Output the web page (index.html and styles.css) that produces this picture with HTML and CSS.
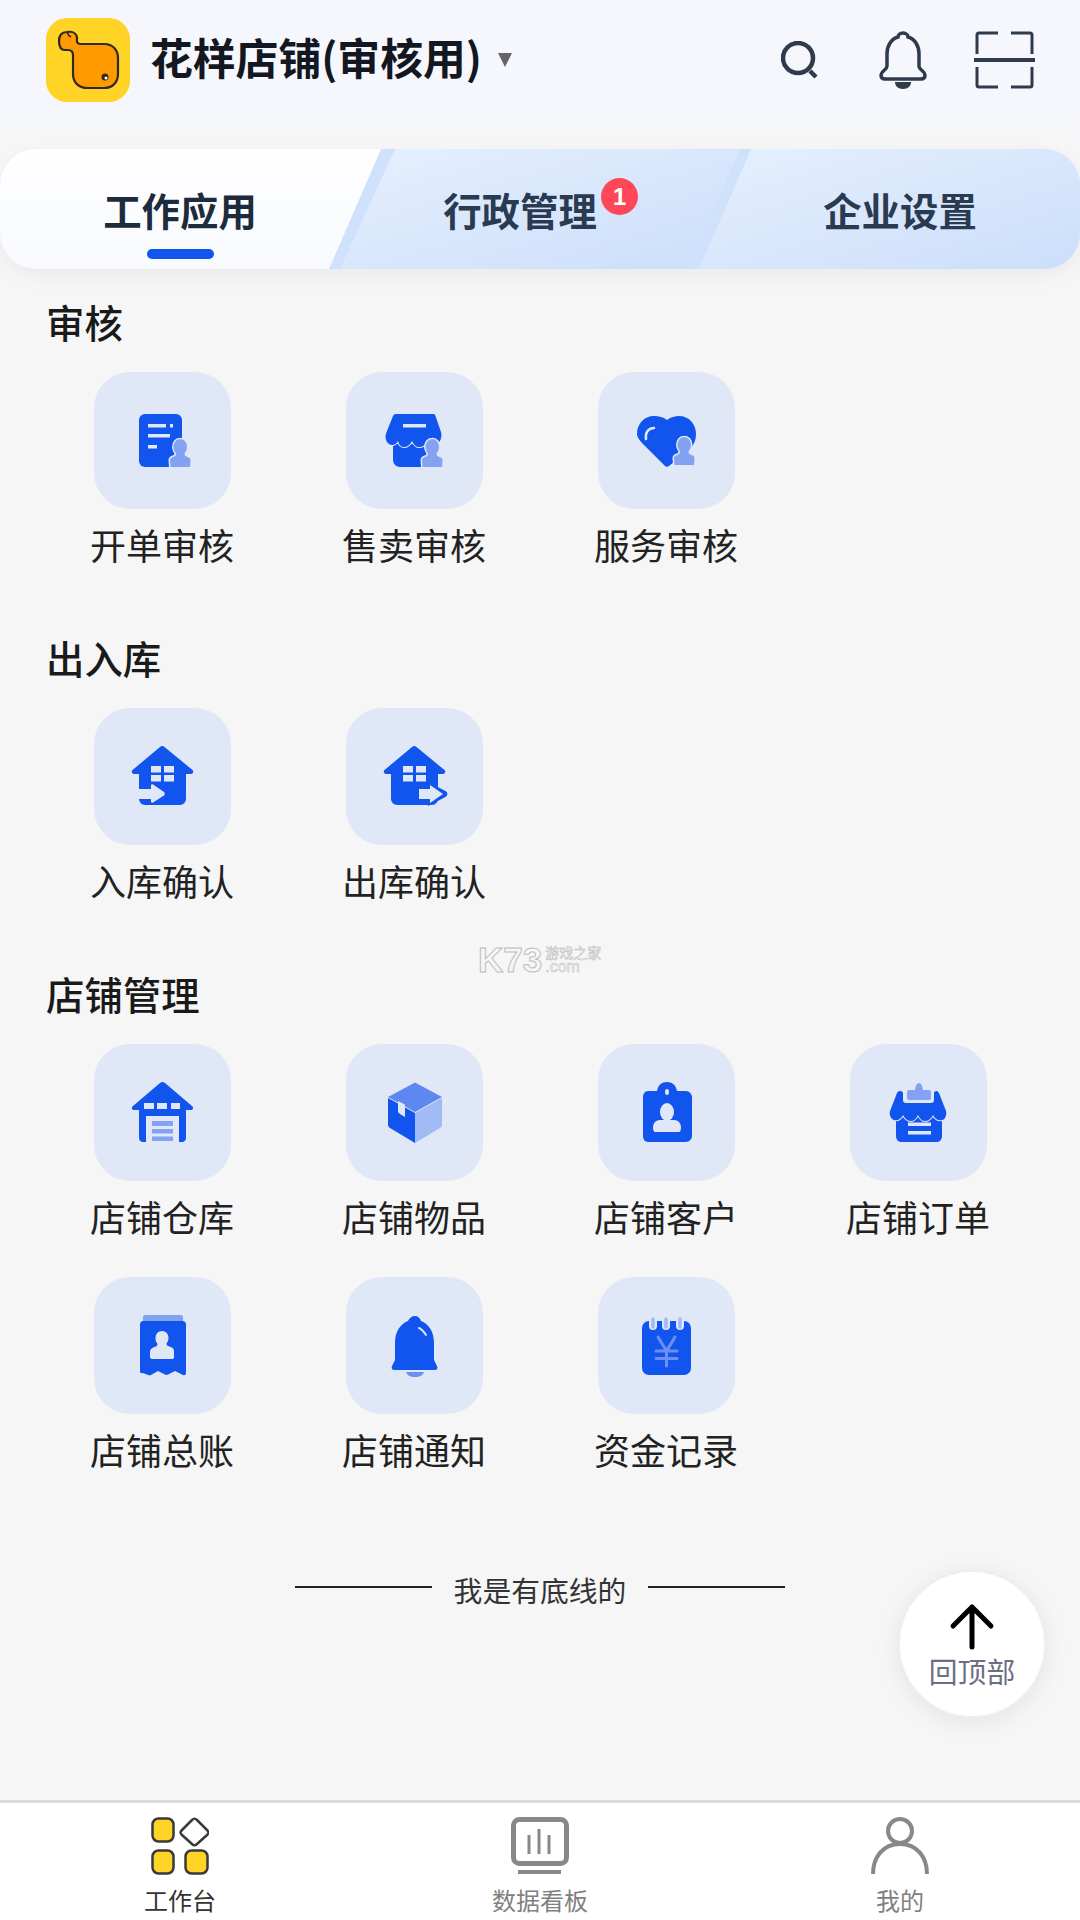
FILE: index.html
```html
<!DOCTYPE html>
<html lang="zh-CN">
<head>
    <meta charset="UTF-8">
    <meta name="viewport" content="width=device-width, initial-scale=1.0">
    <title>花样店铺</title>
    <link rel="stylesheet" href="styles.css">
</head>
<body>
    <svg class="defs" width="0" height="0" aria-hidden="true">
        <symbol id="stamp" viewBox="0 0 137 137">
            <path class="stamp" d="M86 67c4 0 7 3.500 7 8 0 3-1.500 5-2.500 6.500 0 2 1 3 3 3.500 2 .5 3 1.500 3 3l-.5 7H76.500l-.5-7c0-1.500 1-2.500 3-3 2-.5 3-1.500 3-3.500-1-1.500-2.500-3.500-2.500-6.500 0-4.500 3-8 7-8z"/>
        </symbol>
        <symbol id="house" viewBox="0 0 137 137">
            <path class="blue" d="M66 39a3.500 3.500 0 0 1 4.500 0L98.500 62c1.500 1.500.5 4-1.500 4H92v25a6 6 0 0 1-6 6H51a6 6 0 0 1-6-6V66h-5c-2 0-3-2.500-1.500-4z"/>
            <path class="cut" d="M57 58h10v6.500H57zM70 58h10v6.500H70zM57 67h10v6.500H57zM70 67h10v6.500H70z"/>
        </symbol>
    </svg>

    <header class="top-bar">
        <svg class="logo" viewBox="0 0 84 84">
            <rect width="84" height="84" rx="21" fill="#ffd426"/>
            <path d="M34 26H58C67 26 72 32 72 40V56C72 65 66 70 58 70H42C33 70 27 65 27 56V37C27 33 25 32 22 32H19C15 32 13 29 13 23 13 17 16 14 21 14 26 13 30 15 31 19 31 23 30 25 34 26Z" fill="#ff9a00" stroke="#2c2a22" stroke-width="2.200"/>
            <path d="M21 14c1 3 2 4 4 5" fill="none" stroke="#2c2a22" stroke-width="1.500"/>
            <circle cx="59" cy="59" r="3.500" fill="#2c2a22"/>
            <circle cx="60" cy="60" r="1.500" fill="#fff"/>
        </svg>
        <h1 class="shop-name">花样店铺(审核用)</h1>
        <span class="caret"></span>
        <div class="top-actions">
            <svg class="top-icon search-icon" viewBox="0 0 38 38">
                <circle cx="17" cy="17" r="15" fill="none" stroke="#2f3b4d" stroke-width="4.500"/>
                <path d="M29 30l6 6" stroke="#2f3b4d" stroke-width="4.500"/>
            </svg>
            <svg class="top-icon bell-icon" viewBox="0 0 48 58">
                <path d="M24 2c3 0 5 2 5 4 7 2 11 9 11 17v12c0 4 6 5 6 9 0 3-2 4-4 4H6c-2 0-4-1-4-4 0-4 6-5 6-9V23c0-8 4-15 11-17 0-2 2-4 5-4z" fill="none" stroke="#2f3b4d" stroke-width="3.500"/>
                <path d="M16 51h16c0 4-3 7-8 7s-8-3-8-7z" fill="#2f3b4d"/>
            </svg>
            <svg class="top-icon scan-icon" viewBox="0 0 61 58">
                <path d="M24 2H5a2 2 0 0 0-2 2v19M37 2h19a2 2 0 0 1 2 2v19M24 56H5a2 2 0 0 1-2-2V36M37 56h19a2 2 0 0 0 2-2V36" fill="none" stroke="#2f3b4d" stroke-width="3"/>
                <path d="M0 29h61" stroke="#2f3b4d" stroke-width="4"/>
            </svg>
        </div>
    </header>

    <nav class="tabs">
        <svg class="tabs-bg" viewBox="0 0 1080 120" preserveAspectRatio="none">
            <defs>
                <linearGradient id="activeTab" x1="0" y1="0" x2="0" y2="1">
                    <stop offset="0" stop-color="#ffffff"/>
                    <stop offset="1" stop-color="#f8faff"/>
                </linearGradient>
                <linearGradient id="idleTab" x1="0" y1="0" x2="1" y2="1">
                    <stop offset="0" stop-color="#e6f0fe"/>
                    <stop offset="1" stop-color="#cbdefa"/>
                </linearGradient>
            </defs>
            <path d="M395 0h345l-54 120H340z" fill="url(#idleTab)"/>
            <path d="M751 0h329v120H699z" fill="url(#idleTab)"/>
            <path d="M381 0h14l-55 120h-11z" fill="#cfe1fb"/>
            <path d="M740 0h11l-52 120h-13z" fill="#cfe1fb"/>
            <path d="M0 0h381l-52 120H0z" fill="url(#activeTab)"/>
        </svg>
        <a class="tab active">工作应用</a>
        <a class="tab tab-middle"><span class="tab-text">行政管理<span class="badge">1</span></span></a>
        <a class="tab">企业设置</a>
    </nav>

    <main class="content">
        <section class="group">
            <h2>审核</h2>
            <div class="grid">
                <div class="item">
                    <svg class="icon" viewBox="0 0 137 137">
                        <rect class="blue" x="45" y="42" width="43" height="53" rx="6"/>
                        <path class="cut" d="M54 52h18v3.500H54zM76 52h3v3.500h-3zM54 62h22v3.500H54zM54 73h9v3.500h-9z"/>
                        <use href="#stamp" width="137" height="137"/>
                    </svg>
                    <span>开单审核</span>
                </div>
                <div class="item">
                    <svg class="icon" viewBox="0 0 137 137">
                        <path class="blue" d="M47 72h36v23H54a7 7 0 0 1-7-7z"/>
                        <path class="blue awning" d="M51 42h36c1 0 2 .5 2.500 2L95 60c1 4 0 9-3 11-3 2-7 2-10-2-2 4-6 6-9 6s-5-2-7-6c-2 4-5 6-8 6s-5-2-6-6c-2 4-6 5-9 3-3-2-5-7-2-13l6-15c.5-1.500 2-2 4-2z"/>
                        <path class="cut" d="M57 52h23v3.500H57z"/>
                        <use href="#stamp" width="137" height="137"/>
                    </svg>
                    <span>售卖审核</span>
                </div>
                <div class="item">
                    <svg class="icon" viewBox="0 0 137 137">
                        <path class="blue" d="M69 48c4-3 8-4 12-4 10 0 17 8 17 18 0 6-2 10-5 14L71 94c-1 1-3 1-4 0L46 73c-4-4-7-8-7-11 0-10 7-18 17-18 5 0 9 1 13 4z"/>
                        <path d="M48 67c-1-6 2-11 8-11" fill="none" stroke="#e0e7f6" stroke-width="2.500" stroke-linecap="round"/>
                        <use href="#stamp" y="-2" width="137" height="137"/>
                    </svg>
                    <span>服务审核</span>
                </div>
            </div>
        </section>

        <section class="group">
            <h2>出入库</h2>
            <div class="grid">
                <div class="item">
                    <svg class="icon" viewBox="0 0 137 137">
                        <use href="#house" width="137" height="137"/>
                        <path class="cut" d="M44 81h13v-3.500c0-1 1-1.500 2-1l11 7.500c1 1 1 2.500 0 3.500l-11 7c-1 .5-2 0-2-1V91H44z"/>
                    </svg>
                    <span>入库确认</span>
                </div>
                <div class="item">
                    <svg class="icon" viewBox="0 0 137 137">
                        <use href="#house" width="137" height="137"/>
                        <path class="blue" d="M82 74l17.500 9c2.500 1.500 2.500 4.500 0 6L82 98z"/>
                        <path class="cut" d="M73 81h11v-4l13 9-13 9v-4H73z"/>
                    </svg>
                    <span>出库确认</span>
                </div>
            </div>
        </section>

        <section class="group">
            <h2>店铺管理</h2>
            <div class="grid">
                <div class="item">
                    <svg class="icon" viewBox="0 0 137 137">
                        <path class="blue" d="M66 39a4 4 0 0 1 5 0l27 23c2 1.500 1 4-1 4h-5v28c0 2-1.500 4-4 4h-3V72H52v26h-3c-2.500 0-4-2-4-4V66h-5c-2 0-3-2.500-1-4z"/>
                        <path class="cut" d="M50 59h10v6H50zM63 59h10v6H63zM77 59h9v6h-9z"/>
                        <path class="light" d="M58 77h21v5H58zM58 85h21v4.500H58zM58 92.500h21V97H58z"/>
                    </svg>
                    <span>店铺仓库</span>
                </div>
                <div class="item">
                    <svg class="icon" viewBox="0 0 137 137">
                        <path class="blue" d="M42 54l27 15v30L44 84c-1-.5-2-2-2-3z"/>
                        <path class="pale" d="M96 54L69 69v30l25-15c1-.5 2-2 2-3z"/>
                        <path d="M69 38.500L96 53 69 68 42 53z" fill="#5d88f1"/>
                        <path class="cut" d="M52 57l7 3.500V73l-5-3-2-2z"/>
                    </svg>
                    <span>店铺物品</span>
                </div>
                <div class="item">
                    <svg class="icon" viewBox="0 0 137 137">
                        <path class="blue" d="M69 38c5 0 9 3 10 9h9c3 0 6 3 6 6v39c0 3-3 6-6 6H50c-3 0-5-3-5-6V53c0-3 2-6 5-6h9c1-6 5-9 10-9z"/>
                        <ellipse class="cut" cx="69" cy="48" rx="2" ry="3"/>
                        <ellipse class="cut" cx="69" cy="68" rx="7" ry="9"/>
                        <path class="cut" d="M62 76h14c5 0 7 4 7 8 0 2-1 4-2 4H57c-1 0-2-2-2-4 0-4 2-8 7-8z"/>
                    </svg>
                    <span>店铺客户</span>
                </div>
                <div class="item">
                    <svg class="icon" viewBox="0 0 137 137">
                        <path class="blue" d="M46 72h46v20c0 3-2 6-5 6H51c-3 0-5-3-5-6z"/>
                        <path class="blue awning" d="M50 47c2 0 3 1 3 2v7c0 2 1 3 3 3h25c2 0 3-1 3-3v-7c0-1 1-2 2.500-2 1 0 2 1 2.500 2l7 18c1 4-1 9-4 9-4 1-7-1-9-5-2 4-5 6-8 6s-5-2-7-6c-2 4-4 6-7 6s-6-2-8-6c-2 4-5 6-9 5-3-1-5-5-4-9l7-18c.5-1 1-2 3-2z"/>
                        <path class="light" d="M59 46h6c.5-4 2-7 4-7s3.500 3 4 7h6c1 0 2 1 2 2v6c0 1-1 2-2 2H59c-1 0-2-1-2-2v-6c0-1 1-2 2-2z"/>
                        <path class="cut" d="M58 78.500h23v3.500H58zM58 87h23v3.500H58z"/>
                    </svg>
                    <span>店铺订单</span>
                </div>
                <div class="item">
                    <svg class="icon" viewBox="0 0 137 137">
                        <path class="light" d="M51 38h36c1 0 2 1 2 2v6H49v-6c0-1 1-2 2-2z"/>
                        <path class="blue" d="M49 44h40c1.500 0 3 1.500 3 3v49c0 2-1.500 2.500-3 2l-8-4-7 3.500c-1 .5-2 .5-3 0L64 94l-7 4c-1 .5-2 .5-3 0l-5-2c-2 .5-3 0-3-2V47c0-1.500 1.500-3 3-3z"/>
                        <path class="cut" d="M68 54c4 0 6.500 3 6.500 7 0 2.500-1 4-2 5.500 0 1.500 1 2.500 3 3 3 1 4.500 2 4.500 5v5.500c0 1-.5 2-1.500 2H58c-1 0-2-1-2-2V75c0-3 2-4 4.500-5 2-.5 3-1.500 3-3-1-1.500-2-3-2-5.500C61.500 57 64 54 68 54z"/>
                    </svg>
                    <span>店铺总账</span>
                </div>
                <div class="item">
                    <svg class="icon" viewBox="0 0 137 137">
                        <path class="blue" d="M69 39c3 0 5 2 6 5 8 3 13 11 13 22v17l3 6c1 2 0 4-2 4H48c-2 0-3-2-2-4l3-6V66c0-11 5-19 13-22 1-3 4-5 7-5z"/>
                        <path d="M73 51c3 1 5 4 7 7" fill="none" stroke="#e0e7f6" stroke-width="2" stroke-linecap="round"/>
                        <path d="M60 95h18c-1 3-4 5-9 5s-8-2-9-5z" fill="#6b90f0"/>
                    </svg>
                    <span>店铺通知</span>
                </div>
                <div class="item">
                    <svg class="icon" viewBox="0 0 137 137">
                        <rect class="blue" x="44" y="44" width="49" height="54" rx="7"/>
                        <path class="cut" d="M51 42h8v7a4 4 0 0 1-8 0zM64 42h8v7a4 4 0 0 1-8 0zM78 42h8v7a4 4 0 0 1-8 0z"/>
                        <path d="M55 42v8M68 42v8M82 42v8" stroke="#a0baf4" stroke-width="3.500" stroke-linecap="round"/>
                        <path d="M60 60l8.500 14L77 60M68.500 74v15M58 74h21M58 81.500h21" fill="none" stroke="#6b90f0" stroke-width="3" stroke-linecap="round"/>
                    </svg>
                    <span>资金记录</span>
                </div>
            </div>
        </section>

        <div class="bottom-line">我是有底线的</div>
    </main>

    <div class="back-top">
        <svg class="back-arrow" viewBox="0 0 48 48">
            <path d="M24 44V4M5 23L24 4l19 19" fill="none" stroke="#000" stroke-width="5" stroke-linecap="round" stroke-linejoin="round"/>
        </svg>
        <span>回顶部</span>
    </div>

    <div class="watermark">
        <span class="wm-logo">K73</span>
        <span class="wm-side"><span>游戏之家</span><span class="wm-com">.com</span></span>
    </div>

    <footer class="tab-bar">
        <a class="bar-item current">
            <svg class="bar-icon" viewBox="0 0 58 58">
                <g fill="#ffd426" stroke="#3a3a3a" stroke-width="2.500">
                    <rect x="1.500" y="1.500" width="21" height="23" rx="6"/>
                    <rect x="1.500" y="33.500" width="21" height="23" rx="6"/>
                    <rect x="34.500" y="33.500" width="22" height="23" rx="6"/>
                    <path d="M41 3c2-2 3-2 5 0l10 10c2 2 2 3 0 5L46 27c-2 2-3 2-5 0l-10-9c-2-2-2-3 0-5z" fill="none"/>
                </g>
            </svg>
            <span>工作台</span>
        </a>
        <a class="bar-item">
            <svg class="bar-icon" viewBox="0 0 58 58">
                <rect x="2.500" y="2.500" width="53" height="44" rx="6" fill="none" stroke="#888" stroke-width="5"/>
                <path d="M18 18v19M28 12v25M38 18v19" stroke="#888" stroke-width="3"/>
                <path d="M7 53h43v4H7z" fill="#888"/>
            </svg>
            <span>数据看板</span>
        </a>
        <a class="bar-item">
            <svg class="bar-icon" viewBox="0 0 58 58">
                <ellipse cx="29" cy="14" rx="12" ry="12" fill="none" stroke="#888" stroke-width="4"/>
                <path d="M2 57c0-17 10-30 27-30s27 13 27 30" fill="none" stroke="#888" stroke-width="4"/>
            </svg>
            <span>我的</span>
        </a>
    </footer>
</body>
</html>
```

FILE: styles.css
```css
* {
    box-sizing: border-box;
}

body {
    margin: 0;
    width: 1080px;
    height: 1920px;
    overflow: hidden;
    position: relative;
    display: flex;
    flex-direction: column;
    font-family: "Noto Sans CJK SC", "Noto Sans", sans-serif;
    color: #222;
    background: #f6f6f6;
}

.defs {
    position: absolute;
}

/* shared icon fills */
.blue {
    fill: #1255ee;
}

.cut {
    fill: #e0e7f6;
}

.light {
    fill: #84a2f2;
}

.pale {
    fill: #a0baf4;
}

.awning {
    stroke: #e0e7f6;
    stroke-width: 2;
    paint-order: stroke;
}

.stamp {
    fill: #84a2f2;
    stroke: #e0e7f6;
    stroke-width: 3;
    paint-order: stroke;
}

.top-bar {
    height: 149px;
    flex: none;
    display: flex;
    align-items: flex-start;
    padding: 18px 45px 0 46px;
    background: linear-gradient(180deg, #f6f7fc 0%, #f6f7fc 78%, #f6f6f6 100%);
}

.logo {
    width: 84px;
    height: 84px;
    flex: none;
}

.shop-name {
    margin: 0 0 0 20px;
    font-size: 42.8px;
    line-height: 76px;
    font-weight: 700;
    color: #131722;
    white-space: nowrap;
}

.caret {
    margin: 35px 0 0 16px;
    border-left: 7px solid transparent;
    border-right: 7px solid transparent;
    border-top: 14px solid #666;
}

.top-actions {
    margin-left: auto;
    display: flex;
    align-items: flex-start;
}

.top-icon {
    display: block;
    flex: none;
}

.search-icon {
    width: 38px;
    height: 38px;
    margin-top: 23px;
}

.bell-icon {
    width: 48px;
    height: 58px;
    margin: 13px 0 0 60px;
}

.scan-icon {
    width: 61px;
    height: 58px;
    margin: 13px 0 0 47px;
}

.tabs {
    height: 120px;
    flex: none;
    position: relative;
    display: grid;
    grid-template-columns: repeat(3, 1fr);
    border-radius: 36px;
    overflow: hidden;
    background: #dde9fc;
    box-shadow: 0 6px 20px rgba(0, 0, 0, 0.05);
}

.tabs-bg {
    position: absolute;
    inset: 0;
    width: 100%;
    height: 100%;
}

.tab {
    position: relative;
    display: flex;
    justify-content: center;
    align-items: center;
    font-size: 38.4px;
    font-weight: 700;
    color: #2a3a50;
    padding-bottom: 1px;
}

.tab.active {
    color: #1d2b3c;
}

.tab.active::after {
    content: "";
    position: absolute;
    left: 147px;
    bottom: 10px;
    width: 67px;
    height: 10px;
    border-radius: 5px;
    background: #1255ee;
}

.tab-middle {
    padding-right: 40px;
}

.tab-text {
    position: relative;
}

.badge {
    position: absolute;
    left: 158px;
    top: -3px;
    width: 37px;
    height: 37px;
    border-radius: 50%;
    background: #ff4757;
    color: #fff;
    font-family: "Liberation Sans", sans-serif;
    font-size: 24px;
    font-weight: 700;
    line-height: 37px;
    text-align: center;
}

.content {
    flex: 1;
    padding: 25px 0 0 36px;
}

.group {
    margin-bottom: 61px;
}

.group h2 {
    margin: 0 0 24px 10px;
    font-size: 38.4px;
    line-height: 54px;
    font-weight: 500;
    color: #1a1a1a;
}

.grid {
    display: grid;
    grid-template-columns: repeat(4, 252px);
    row-gap: 36px;
}

.item {
    display: flex;
    flex-direction: column;
    align-items: center;
    font-size: 36px;
    line-height: 50px;
    color: #222;
    white-space: nowrap;
}

.icon {
    display: block;
    width: 137px;
    height: 137px;
    margin-bottom: 10px;
    border-radius: 36px;
    background: #e0e7f6;
}

.bottom-line {
    margin: 96px 0 0 -36px;
    display: flex;
    justify-content: center;
    align-items: center;
    gap: 22px;
    font-size: 28.8px;
    line-height: 40px;
    color: #333;
}

.bottom-line::before,
.bottom-line::after {
    content: "";
    width: 137px;
    height: 2px;
    margin-top: -6px;
    background: #222;
}

.back-top {
    position: absolute;
    left: 898px;
    top: 1570px;
    width: 148px;
    height: 148px;
    border-radius: 50%;
    background: #fff;
    border: 2px solid #eceef6;
    box-shadow: 0 4px 24px rgba(0, 0, 0, 0.08);
    display: flex;
    flex-direction: column;
    align-items: center;
    font-size: 28.8px;
    line-height: 40px;
    color: #6b7080;
}

.back-arrow {
    width: 48px;
    height: 48px;
    margin-top: 31px;
    flex: none;
}

.watermark {
    position: absolute;
    left: 478px;
    top: 941px;
    display: flex;
    align-items: center;
    gap: 3px;
    color: transparent;
    font-family: "Liberation Sans", "Noto Sans CJK SC", sans-serif;
}

.wm-logo {
    font-size: 35px;
    line-height: 38px;
    font-weight: 700;
    -webkit-text-stroke: 1px #bdbdbd;
}

.wm-side {
    display: flex;
    flex-direction: column;
    font-size: 14px;
    line-height: 14px;
    -webkit-text-stroke: 0.5px #b8b8b8;
}

.wm-com {
    font-size: 16px;
}

.tab-bar {
    height: 120px;
    flex: none;
    display: grid;
    grid-template-columns: repeat(3, 1fr);
    background: #fff;
    border-top: 3px solid #dcdcdc;
}

.bar-item {
    display: flex;
    flex-direction: column;
    align-items: center;
    padding-top: 14px;
    font-size: 24px;
    line-height: 36px;
    color: #808080;
}

.bar-item.current {
    color: #333;
}

.bar-icon {
    display: block;
    width: 58px;
    height: 58px;
    margin-bottom: 7px;
}
```
